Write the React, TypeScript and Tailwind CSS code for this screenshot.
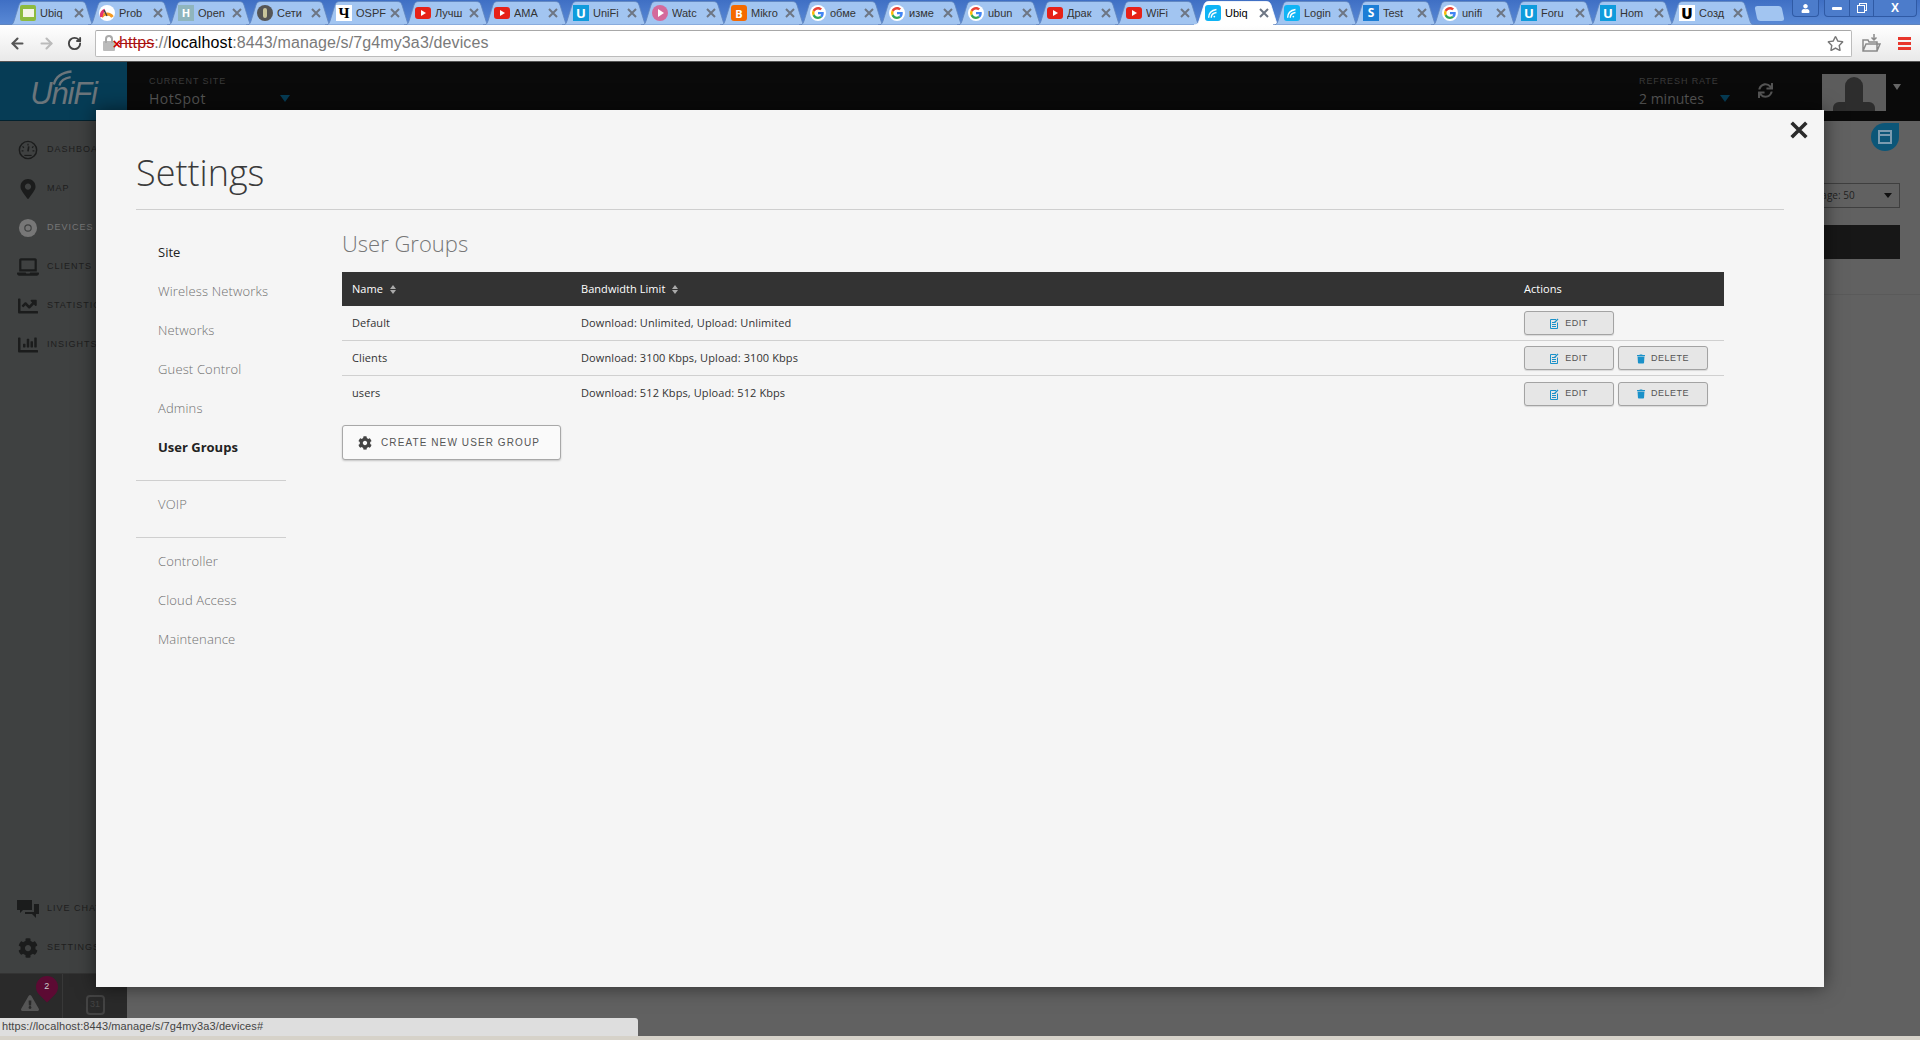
import React from "react";
import { FaMapMarkerAlt, FaLaptop, FaChartLine, FaChartBar, FaCog, FaTrash, FaSync, FaExclamationTriangle, FaRegStar, FaUser } from "react-icons/fa";
import { ArrowLeft, ArrowRight, RotateCw } from "lucide-react";

type IconKind = "mail" | "gauge" | "h" | "seal" | "ch" | "yt" | "u" | "play" | "blog" | "g" | "wifi" | "s" | "ub";

const tabs: { t: string; i: IconKind; active?: boolean }[] = [
  { t: "Ubiq", i: "mail" }, { t: "Prob", i: "gauge" }, { t: "Open", i: "h" }, { t: "Сети", i: "seal" },
  { t: "OSPF", i: "ch" }, { t: "Лучш", i: "yt" }, { t: "AMA", i: "yt" }, { t: "UniFi", i: "u" },
  { t: "Watc", i: "play" }, { t: "Mikro", i: "blog" }, { t: "обме", i: "g" }, { t: "изме", i: "g" },
  { t: "ubun", i: "g" }, { t: "Драк", i: "yt" }, { t: "WiFi", i: "yt" }, { t: "Ubiq", i: "wifi", active: true },
  { t: "Login", i: "wifi" }, { t: "Test", i: "s" }, { t: "unifi", i: "g" }, { t: "Foru", i: "u" },
  { t: "Hom", i: "u" }, { t: "Созд", i: "ub" },
];

function WifiArcs({ color = "#fff" }: { color?: string }) {
  return (
    <svg viewBox="0 0 16 16" className="h-full w-full" fill="none" stroke={color} strokeWidth="1.6">
      <path d="M3 13.5c0-5 3-8.5 9-9.5" />
      <path d="M6 13.5c0-3 2-5.5 6-6" />
      <circle cx="9.5" cy="12" r="1" fill={color} stroke="none" />
    </svg>
  );
}

function TabIcon({ kind }: { kind: IconKind }) {
  switch (kind) {
    case "mail":
      return <div className="flex h-[16px] w-[16px] items-center justify-center rounded-[2px] bg-[#8dbb3f]"><div className="h-[8px] w-[11px] bg-[#f4f4e8]" /></div>;
    case "gauge":
      return (
        <svg viewBox="0 0 16 16" className="h-[16px] w-[16px] rounded-full bg-white" fill="none">
          <path d="M2.500 12a6.500 6.500 0 0 1 11 0" stroke="#f59a23" strokeWidth="3" />
          <path d="M2.500 12a6.500 6.500 0 0 1 3.500-7" stroke="#e5356f" strokeWidth="3" />
          <path d="M8 11 5 5" stroke="#444" strokeWidth="1.400" />
        </svg>
      );
    case "h":
      return <div className="flex h-[16px] w-[16px] items-center justify-center bg-[#8fb5bd] text-[11px] font-bold text-white">H</div>;
    case "seal":
      return <div className="flex h-[16px] w-[16px] items-center justify-center rounded-full bg-[#555]"><div className="h-[10px] w-[4px] rounded-full bg-[#c9c49a]" /></div>;
    case "ch":
      return <div className="flex h-[16px] w-[16px] items-center justify-center bg-white font-['Liberation_Serif',serif] text-[15px] font-bold leading-none text-black">Ч</div>;
    case "yt":
      return <div className="flex h-[12px] w-[16px] items-center justify-center rounded-[3px] bg-[#e62117]"><div className="h-0 w-0 border-y-[3px] border-l-[5px] border-y-transparent border-l-white" /></div>;
    case "u":
      return <div className="flex h-[16px] w-[16px] items-center justify-center bg-[#0f9bdc] text-[13px] font-bold leading-none text-white">U</div>;
    case "play":
      return <div className="flex h-[16px] w-[16px] items-center justify-center rounded-full bg-[#d46a9c]"><div className="ml-[2px] h-0 w-0 border-y-[4px] border-l-[6px] border-y-transparent border-l-white" /></div>;
    case "blog":
      return <div className="flex h-[16px] w-[16px] items-center justify-center rounded-[3px] bg-[#f56a00] text-[11px] font-bold leading-none text-white">B</div>;
    case "g":
      return (
        <svg viewBox="0 0 48 48" className="h-[16px] w-[16px] rounded-full bg-white">
          <g transform="translate(6 6) scale(.75)">
            <path fill="#EA4335" d="M24 9.5c3.5 0 6.7 1.2 9.2 3.6l6.9-6.9C35.9 2.4 30.5 0 24 0 14.6 0 6.5 5.4 2.6 13.2l8 6.2C12.4 13.7 17.7 9.5 24 9.5z" />
            <path fill="#4285F4" d="M47 24.5c0-1.6-.1-3.1-.4-4.5H24v9h13c-.6 3-2.2 5.5-4.8 7.2l7.7 6C44.4 38 47 31.8 47 24.5z" />
            <path fill="#FBBC05" d="M10.500 28.600A14.400 14.400 0 0 1 10.500 19.400l-8-6.200A24 24 0 0 0 2.600 34.800z" />
            <path fill="#34A853" d="M24 48c6.500 0 11.900-2.100 15.900-5.800l-7.700-6c-2.200 1.400-4.900 2.300-8.200 2.300-6.300 0-11.600-4.200-13.500-9.900l-8 6.200C6.500 42.600 14.600 48 24 48z" />
          </g>
        </svg>
      );
    case "wifi":
      return <div className="h-[16px] w-[16px] rounded-[3px] bg-[#0fb4f5] p-[1px]"><WifiArcs /></div>;
    case "s":
      return <div className="flex h-[16px] w-[16px] items-center justify-center bg-[#1c7ed6] text-[12px] font-bold leading-none text-white">S</div>;
    case "ub":
      return <div className="flex h-[16px] w-[16px] items-center justify-center bg-white text-[15px] font-black leading-none text-black">U</div>;
  }
}

function Tab({ t, i, active }: { t: string; i: IconKind; active?: boolean }) {
  return (
    <div className="relative -mr-[9px] flex h-[24px] w-[88px] shrink-0 items-center pl-[10px]">
      <svg viewBox="0 0 88 24" className="absolute inset-0 h-[24px] w-[88px]">
        <path
          d="M0 24c3 0 4-1 5-4L10 4c1-2.500 2-3.500 5-3.500h57c3 0 4 1 5 3.500l5 16c1 3 2 4 6 4z"
          fill={active ? "#ffffff" : "#a2c5f1"}
          stroke={active ? "#ffffff" : "#5f84bd"}
          strokeWidth="0.8"
        />
      </svg>
      <div className="relative flex items-center">
        <div className="flex w-[18px] justify-center"><TabIcon kind={i} /></div>
        <div className={`ml-[3px] w-[31px] overflow-hidden whitespace-nowrap font-['Liberation_Sans',sans-serif] text-[11px] leading-[24px] ${active ? "text-black" : "text-[#333]"}`}>{t}</div>
        <svg viewBox="0 0 10 10" className="ml-[3px] h-[10px] w-[10px]" stroke="#6d7684" strokeWidth="2"><path d="M1 1l8 8M9 1l-8 8" /></svg>
      </div>
    </div>
  );
}

function Chrome() {
  return (
    <>
      <div className="flex h-[25px] items-start justify-between bg-[#4e7dcb] bg-gradient-to-b from-[#3f6fc4] to-[#5a8ad6] pl-[9px] shadow-[inset_0_-1px_0_#5f84bd]">
        <div className="flex items-start pt-[1px]">
          {tabs.map((x, n) => <Tab key={n} {...x} />)}
          <div className="ml-[9px] mt-[5px] h-[15px] w-[27px] skew-x-12 rounded-[3px] bg-[#a2c5f1]" />
        </div>
        <div className="mr-[3px] flex h-[17px] items-start gap-[5px] text-white">
          <div className="flex h-[17px] w-[27px] items-center justify-center rounded-b-[4px] border border-t-0 border-[#2f5aa5] bg-[#4c7ccb]"><FaUser className="h-[9px] w-[9px]" /></div>
          <div className="flex h-[17px] w-[93px] items-center rounded-b-[4px] border border-t-0 border-[#2f5aa5] bg-[#4c7ccb] font-['Liberation_Sans',sans-serif] text-[12px] font-bold">
            <div className="flex h-full w-[25px] items-center justify-center border-r border-[#2f5aa5]"><div className="h-[3px] w-[10px] rounded-[1px] bg-white" /></div>
            <div className="flex h-full w-[24px] items-center justify-center border-r border-[#2f5aa5]">
              <div className="relative h-[10px] w-[10px]">
                <div className="absolute right-0 top-0 h-[8px] w-[8px] border border-white" />
                <div className="absolute bottom-0 left-0 h-[8px] w-[8px] border border-white bg-[#4c7ccb]" />
              </div>
            </div>
            <span className="flex-1 text-center">X</span>
          </div>
        </div>
      </div>
      <div className="flex h-[36px] items-center gap-[5px] bg-gradient-to-b from-[#ffffff] to-[#e9e9e9] pl-[9px] pr-[8px]">
        <div className="flex w-[81px] shrink-0 items-center gap-[12px]">
          <ArrowLeft className="h-[17px] w-[17px] text-[#555]" strokeWidth={3} />
          <ArrowRight className="h-[17px] w-[17px] text-[#bbb]" strokeWidth={3} />
          <RotateCw className="h-[15px] w-[15px] text-[#444]" strokeWidth={3} />
        </div>
        <div className="flex h-[27px] min-w-0 flex-1 items-center rounded-[2px] border border-[#bcbcbc] border-t-[#a8a8a8] bg-white pl-[7px] pr-[7px]">
          <div className="relative h-[16px] w-[16px] shrink-0">
            <div className="absolute bottom-0 left-0 h-[10px] w-[12px] rounded-[1px] bg-[#bbb]" />
            <div className="absolute left-[2px] top-0 h-[8px] w-[8px] rounded-t-full border-2 border-b-0 border-[#aaa]" />
            <span className="absolute -right-[2px] top-[3px] font-['Liberation_Sans',sans-serif] text-[14px] font-bold leading-[12px] text-[#c00]">×</span>
          </div>
          <div className="min-w-0 flex-1 font-['Liberation_Sans',sans-serif] text-[16px] tracking-[0.12px] text-[#7a7a7a]">
            <span className="text-[#a11] line-through">https</span>://<span className="text-black">localhost</span>:8443/manage/s/7g4my3a3/devices
          </div>
          <FaRegStar className="h-[17px] w-[17px] text-[#777]" />
        </div>
        <svg viewBox="0 0 20 20" className="ml-[4px] h-[20px] w-[20px]" fill="none" stroke="#8a8a8a" strokeWidth="1.500">
          <path d="M2 18V7h5l1 2h8v9zM2 18l3-7h14l-3 7" />
          <path d="M13 1v6M10.500 4.500 13 7l2.500-2.500" />
        </svg>
        <div className="ml-[12px] mr-[1px] flex w-[13px] flex-col gap-[2px]">
          <div className="h-[3px] bg-[#e8362c]" />
          <div className="h-[3px] bg-[#e8362c]" />
          <div className="h-[3px] bg-[#e8362c]" />
        </div>
      </div>
    </>
  );
}

function AppHeader() {
  return (
    <div className="flex h-[60px] shrink-0 border-t border-[#555] bg-[#0a0a0a] font-['Open_Sans',sans-serif]">
      <div className="flex w-[127px] shrink-0 flex-col items-center justify-center border-b border-[#03222f] bg-[#063c55]">
        <div className="relative pt-[5px] font-['Liberation_Sans',sans-serif] text-[31px] italic leading-none tracking-[-1.2px] text-[#6b757b]">
          <svg viewBox="0 0 30 20" className="absolute left-[21px] -top-[5px] h-[20px] w-[28px]" fill="none" stroke="#6b757b" strokeWidth="2.500">
            <path d="M3 17C5 9 11 4 22 3" />
            <path d="M9 18c1-4 5-8 12-9" />
          </svg>
          <span className="relative">UniFi</span>
        </div>
      </div>
      <div className="relative flex h-[49px] flex-1 items-center justify-between pl-[22px]">
        <div className="flex w-[141px] flex-col pt-[11px]">
          <div className="font-['Liberation_Sans',sans-serif] text-[9px] tracking-[0.9px] text-[#3a3a3a]">CURRENT SITE</div>
          <div className="flex items-center justify-between text-[14px] leading-[20px] tracking-[0.5px] text-[#555]">
            HotSpot
            <div className="h-0 w-0 border-x-[5px] border-t-[7px] border-x-transparent border-t-[#063c55]" />
          </div>
        </div>
        <div className="flex h-full items-center">
          <div className="mr-[28px] flex w-[91px] flex-col pt-[11px]">
            <div className="font-['Liberation_Sans',sans-serif] text-[9px] tracking-[0.9px] text-[#3a3a3a]">REFRESH RATE</div>
            <div className="flex items-center justify-between text-[14px] leading-[20px] text-[#555]">
              2 minutes
              <div className="h-0 w-0 border-x-[5px] border-t-[7px] border-x-transparent border-t-[#063c55]" />
            </div>
          </div>
          <FaSync className="mr-[49px] mt-[7px] h-[15px] w-[15px] text-[#555]" />
          <div className="mr-[7px] h-[37px] w-[64px] self-end overflow-hidden bg-[#5c5c5c]">
            <div className="mx-auto mt-[3px] h-[26px] w-[18px] rounded-t-full rounded-b-[8px] bg-[#2d2d2d]" />
            <div className="mx-auto -mt-[1px] h-[9px] w-[42px] rounded-t-[6px] bg-[#2d2d2d]" />
          </div>
          <div className="mr-[19px] h-0 w-0 border-x-[4px] border-t-[6px] border-x-transparent border-t-[#666]" />
        </div>
      </div>
    </div>
  );
}

type IconC = React.ComponentType<{ className?: string }>;

const DashIcon: IconC = ({ className }) => (
  <svg viewBox="0 0 22 22" className={className} fill="none" stroke="currentColor">
    <circle cx="11" cy="11" r="9.500" strokeWidth="1.600" />
    <path d="M11 4v2M5 7l1.500 1.500M17 7l-1.500 1.500M4 12h2M16 12h2" strokeWidth="1.300" />
    <path d="M11 12.500 11.800 7" strokeWidth="1.800" />
    <path d="M7 17h8" strokeWidth="1.300" />
  </svg>
);
const DiscIcon: IconC = ({ className }) => (
  <svg viewBox="0 0 22 22" className={className}>
    <circle cx="11" cy="11" r="10" fill="currentColor" />
    <circle cx="11" cy="11" r="3.500" fill="none" stroke="#3f4141" strokeWidth="1.300" />
  </svg>
);
const ChatIcon: IconC = ({ className }) => (
  <svg viewBox="0 0 22 20" className={className} fill="currentColor">
    <path d="M0 1h15v10H6l-3 3v-3H0z" />
    <path d="M17 5h5v10h-3v4l-4-4H8v-2h9z" />
  </svg>
);

const navTop: { l: string; I: IconC; on?: boolean }[] = [
  { l: "DASHBOARD", I: DashIcon },
  { l: "MAP", I: FaMapMarkerAlt },
  { l: "DEVICES", I: DiscIcon, on: true },
  { l: "CLIENTS", I: FaLaptop },
  { l: "STATISTICS", I: FaChartLine },
  { l: "INSIGHTS", I: FaChartBar },
];

function SideItem({ l, I, on }: { l: string; I: IconC; on?: boolean }) {
  return (
    <div className="flex h-[39px] items-center pl-[17px]">
      <I className={`h-[20px] w-[22px] ${on ? "text-[#777]" : "text-[#1b1c1c]"}`} />
      <span className={`ml-[8px] whitespace-nowrap font-['Liberation_Sans',sans-serif] text-[9px] tracking-[1px] ${on ? "text-[#777]" : "text-[#1e1e1e]"}`}>{l}</span>
    </div>
  );
}

function Sidebar() {
  return (
    <div className="flex w-[127px] shrink-0 flex-col justify-between overflow-hidden bg-[#3f4141] pt-[9px]">
      <div>{navTop.map((n) => <SideItem key={n.l} {...n} />)}</div>
      <div>
        <div className="mb-[6px]">
          <SideItem l="LIVE CHAT" I={ChatIcon} />
          <SideItem l="SETTINGS" I={FaCog} />
        </div>
        <div className="relative flex h-[63px] border-t border-[#333] bg-[#2a2a2a]">
          <div className="flex w-[63px] justify-center border-r border-[#383838] pr-[3px] pt-[21px]">
            <FaExclamationTriangle className="h-[16px] w-[18px] text-[#555]" />
          </div>
          <div className="flex flex-1 justify-center pt-[21px]">
            <div className="flex h-[20px] w-[19px] items-center justify-center rounded-[4px] border-2 border-[#444] font-['Liberation_Sans',sans-serif] text-[9px] text-[#444]">31</div>
          </div>
          <div className="absolute left-[36px] top-[2px] flex h-[22px] w-[22px] rotate-45 items-center justify-center rounded-full rounded-br-none bg-[#5c0a33]">
            <span className="-rotate-45 font-['Liberation_Sans',sans-serif] text-[9px] text-[#ccc]">2</span>
          </div>
        </div>
      </div>
    </div>
  );
}

function EditIcon() {
  return (
    <svg viewBox="0 0 9 11" className="h-[11px] w-[9px]" fill="none" stroke="#1a91c9" strokeWidth="1">
      <path d="M6 1.500H.5v9h7V4.500" />
      <path d="M2 4.500h3.500M2 6.500h4M2 8.500h4" />
      <path d="M4.500 4.500 8 1" strokeWidth="1.200" />
    </svg>
  );
}

function ActionBtn({ del }: { del?: boolean }) {
  return (
    <button className="flex h-[24px] w-[90px] items-center justify-center gap-[6px] rounded-[3px] border border-[#a3a3a3] bg-[#e6e6e6] pt-[1px] font-['Liberation_Sans',sans-serif] text-[9px] tracking-[0.5px] text-[#555] shadow-[0_1px_1px_rgba(0,0,0,0.12)]">
      {del ? <FaTrash className="h-[10px] w-[8px] text-[#1a91c9]" /> : <EditIcon />}
      {del ? "DELETE" : "EDIT"}
    </button>
  );
}

function SortIcon() {
  return (
    <span className="ml-[7px] inline-flex flex-col gap-[1px] align-middle">
      <span className="h-0 w-0 border-x-[3px] border-b-[4px] border-x-transparent border-b-[#aaa]" />
      <span className="h-0 w-0 border-x-[3px] border-t-[4px] border-x-transparent border-t-[#aaa]" />
    </span>
  );
}

const rows = [
  { n: "Default", b: "Download: Unlimited, Upload: Unlimited", del: false },
  { n: "Clients", b: "Download: 3100 Kbps, Upload: 3100 Kbps", del: true },
  { n: "users", b: "Download: 512 Kbps, Upload: 512 Kbps", del: true },
];

const menu1 = ["Site", "Wireless Networks", "Networks", "Guest Control", "Admins", "User Groups"];
const menu3 = ["Controller", "Cloud Access", "Maintenance"];

function MenuLink({ l }: { l: string }) {
  const cls = l === "User Groups" ? "font-bold text-[#222]" : l === "Site" ? "text-[#222]" : "font-light tracking-[0.15px] text-[#707070]";
  return <div className={`h-[39px] pl-[22px] text-[13px] leading-[39px] ${cls}`}>{l}</div>;
}

function Modal() {
  return (
    <div className="absolute left-[96px] top-[110px] h-[877px] w-[1728px] bg-[#f5f5f5] px-[40px] font-['Open_Sans',sans-serif] shadow-[0_0_18px_rgba(0,0,0,0.55)]">
      <div className="absolute right-[16px] top-[11px] text-[#2b2b2b]">
        <svg viewBox="0 0 16 16" className="h-[18px] w-[18px]" stroke="currentColor" strokeWidth="3.200"><path d="M1.500 1.500l13 13M14.500 1.500l-13 13" /></svg>
      </div>
      <div className="h-[100px] border-b border-[#cfcfcf] pt-[38px] text-[36px] font-light leading-[50px] text-[#3a3a3a]">Settings</div>
      <div className="flex">
        <div className="w-[150px] shrink-0 pt-[23px]">
          {menu1.map((l) => <MenuLink key={l} l={l} />)}
          <div className="mt-[13px] border-t border-[#cfcfcf] pt-[4px] pb-[13px]"><MenuLink l="VOIP" /></div>
          <div className="border-t border-[#cfcfcf] pt-[4px]">{menu3.map((l) => <MenuLink key={l} l={l} />)}</div>
        </div>
        <div className="ml-[56px] w-[1382px] pt-[17px]">
          <div className="text-[22px] font-light leading-[32px] text-[#777]">User Groups</div>
          <div className="mt-[13px] flex h-[34px] items-center bg-[#333] text-[11px] tracking-[0.05px] text-white">
            <div className="w-[239px] pl-[10px]">Name<SortIcon /></div>
            <div className="flex-1">Bandwidth Limit<SortIcon /></div>
            <div className="w-[200px]">Actions</div>
          </div>
          {rows.map((r, i) => (
            <div key={r.n} className={`flex h-[35px] items-center text-[11px] tracking-[0.1px] text-[#333] ${i < 2 ? "border-b border-[#d0d0d0]" : ""}`}>
              <div className="w-[239px] pl-[10px]">{r.n}</div>
              <div className="flex-1">{r.b}</div>
              <div className="flex w-[200px] gap-[4px]">
                <ActionBtn />
                {r.del && <ActionBtn del />}
              </div>
            </div>
          ))}
          <button className="mt-[14px] flex h-[35px] w-[219px] items-center whitespace-nowrap rounded-[3px] border border-[#a8a8a8] bg-[#fafafa] pl-[15px] font-['Liberation_Sans',sans-serif] text-[10px] tracking-[1.1px] text-[#555] shadow-[0_1px_2px_rgba(0,0,0,0.2)]">
            <FaCog className="mr-[9px] h-[14px] w-[14px] text-[#444]" />
            CREATE NEW USER GROUP
          </button>
        </div>
      </div>
    </div>
  );
}

function Behind() {
  return (
    <div className="flex min-w-0 flex-1 flex-col items-end bg-[#616161] pr-[20px] font-['Open_Sans',sans-serif]">
      <div className="mr-[1px] mt-[2px] h-[28px] w-[28px] rounded-full rounded-tr-none bg-[#0c5678] p-[7px]">
        <div className="h-[14px] w-[14px] border-2 border-[#7a9bb0] pt-[2px]"><div className="h-[2px] bg-[#7a9bb0]" /></div>
      </div>
      <div className="mt-[32px] flex h-[25px] w-[120px] items-center justify-between border border-[#3f3f3f] pl-[16px] pr-[7px] text-[10px] text-[#222]">
        Per Page: 50
        <div className="h-0 w-0 border-x-[4px] border-t-[5px] border-x-transparent border-t-[#111]" />
      </div>
      <div className="mt-[17px] h-[34px] w-[200px] bg-[#171717]" />
      <div className="mr-[-20px] mt-[35px] w-[200px] border-t border-[#5a5a5a]" />
    </div>
  );
}

export default function App() {
  return (
    <div className="relative flex h-[1040px] w-[1920px] flex-col overflow-hidden bg-[#616161]">
      <Chrome />
      <AppHeader />
      <div className="flex min-h-0 flex-1">
        <Sidebar />
        <Behind />
      </div>
      <div className="h-[4px] shrink-0 bg-[#d6d2c9]" />
      <Modal />
      <div className="absolute bottom-[4px] left-0 h-[18px] w-[638px] rounded-tr-[3px] bg-[#dedede] pl-[2px] font-['Liberation_Sans',sans-serif] text-[11px] leading-[16px] tracking-[0.1px] text-[#444]">
        https://localhost:8443/manage/s/7g4my3a3/devices#
      </div>
    </div>
  );
}
